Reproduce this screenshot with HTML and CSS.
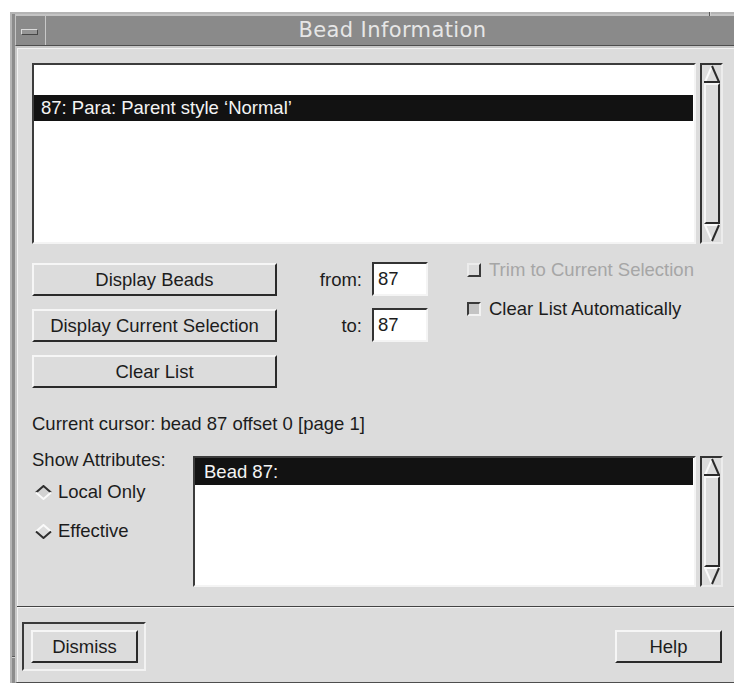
FILE: index.html
```html
<!DOCTYPE html>
<html lang="en">
<head>
<meta charset="utf-8">
<title>Bead Information</title>
<link rel="stylesheet" href="styles.css">
</head>
<body>
<div class="frame">
  <span class="frame-notch"></span>
  <span class="frame-side-notch"></span>
  <div class="titlebar">
    <div class="menu-btn"><span class="menu-glyph"></span></div>
    <div class="title">Bead Information</div>
  </div>

  <div class="dialog">
    <div class="work">
      <div class="list-row">
        <div class="list main-list">
          <div class="item"></div>
          <div class="item selected">87: Para: Parent style ‘Normal’</div>
        </div>
        <div class="scrollbar">
          <svg class="arrow" viewBox="0 0 16 18" width="16" height="18">
            <polygon points="1,17 8,1 15,17" fill="#dcdcdc"/>
            <line x1="1" y1="17" x2="8" y2="1" stroke="#fafafa" stroke-width="2"/>
            <line x1="8" y1="1" x2="15" y2="17" stroke="#2a2a2a" stroke-width="2"/>
            <line x1="0" y1="17" x2="16" y2="17" stroke="#2a2a2a" stroke-width="2"/>
          </svg>
          <div class="thumb"></div>
          <svg class="arrow" viewBox="0 0 16 18" width="16" height="18">
            <polygon points="1,1 15,1 8,17" fill="#dcdcdc"/>
            <line x1="0" y1="1" x2="16" y2="1" stroke="#fafafa" stroke-width="2"/>
            <line x1="1" y1="1" x2="8" y2="17" stroke="#fafafa" stroke-width="2"/>
            <line x1="15" y1="1" x2="8" y2="17" stroke="#2a2a2a" stroke-width="2"/>
          </svg>
        </div>
      </div>

      <div class="controls">
        <button class="btn wide">Display Beads</button>
        <span class="field-label">from:</span>
        <span class="field">87</span>
        <div class="toggles">
          <div class="toggle disabled"><span class="check raised"></span>Trim to Current Selection</div>
          <div class="toggle"><span class="check sunken"></span>Clear List Automatically</div>
        </div>
        <button class="btn wide">Display Current Selection</button>
        <span class="field-label">to:</span>
        <span class="field">87</span>
        <button class="btn wide">Clear List</button>
      </div>

      <div class="cursor-line">Current cursor: bead 87 offset 0 [page 1]</div>

      <div class="attrs">
        <div class="attr-opts">
          <div class="attr-label">Show Attributes:</div>
          <div class="radio first">
            <svg viewBox="0 0 17 15" width="17" height="15">
              <polygon points="8.5,1 16,7.5 8.5,14 1,7.5" fill="#d2d2d2"/>
              <polyline points="1,7.5 8.5,1 16,7.5" fill="none" stroke="#2e2e2e" stroke-width="2"/>
              <polyline points="1,7.5 8.5,14 16,7.5" fill="none" stroke="#fafafa" stroke-width="2"/>
            </svg>
            <span>Local Only</span>
          </div>
          <div class="radio second">
            <svg viewBox="0 0 17 15" width="17" height="15">
              <polygon points="8.5,1 16,7.5 8.5,14 1,7.5" fill="#dcdcdc"/>
              <polyline points="1,7.5 8.5,1 16,7.5" fill="none" stroke="#fafafa" stroke-width="2"/>
              <polyline points="1,7.5 8.5,14 16,7.5" fill="none" stroke="#2e2e2e" stroke-width="2"/>
            </svg>
            <span>Effective</span>
          </div>
        </div>
        <div class="list-row attr-row">
          <div class="list attr-list">
            <div class="item selected tall">Bead 87:</div>
          </div>
          <div class="scrollbar">
            <svg class="arrow" viewBox="0 0 16 18" width="16" height="18">
              <polygon points="1,17 8,1 15,17" fill="#dcdcdc"/>
              <line x1="1" y1="17" x2="8" y2="1" stroke="#fafafa" stroke-width="2"/>
              <line x1="8" y1="1" x2="15" y2="17" stroke="#2a2a2a" stroke-width="2"/>
              <line x1="0" y1="17" x2="16" y2="17" stroke="#2a2a2a" stroke-width="2"/>
            </svg>
            <div class="thumb"></div>
            <svg class="arrow" viewBox="0 0 16 18" width="16" height="18">
              <polygon points="1,1 15,1 8,17" fill="#dcdcdc"/>
              <line x1="0" y1="1" x2="16" y2="1" stroke="#fafafa" stroke-width="2"/>
              <line x1="1" y1="1" x2="8" y2="17" stroke="#fafafa" stroke-width="2"/>
              <line x1="15" y1="1" x2="8" y2="17" stroke="#2a2a2a" stroke-width="2"/>
            </svg>
          </div>
        </div>
      </div>
    </div>

    <div class="separator"></div>

    <div class="actions">
      <div class="default-ring"><button class="btn small">Dismiss</button></div>
      <button class="btn small">Help</button>
    </div>
  </div>
</div>
</body>
</html>
```

FILE: styles.css
```css
html, body {
  margin: 0;
  padding: 0;
  overflow: hidden;
  background: #ffffff;
}

body {
  width: 734px;
  height: 685px;
  font-family: "Liberation Sans", Arial, sans-serif;
  font-size: 18.5px;
  color: #1c1c1c;
}

/* window manager frame */
.frame {
  position: relative;
  margin: 12px 0 0 10px;
  width: 724px;
  background: #8c8c8c;
  border-top: 2px solid #b4b4b4;
  border-left: 2px solid #b4b4b4;
  border-right: 2px solid #5a5a5a;
  padding: 0 3px;
}

.frame-notch {
  position: absolute;
  left: 697px;
  top: -2px;
  width: 1px;
  height: 4px;
  background: #5a5a5a;
  border-right: 1px solid #d0d0d0;
}

.frame-side-notch {
  position: absolute;
  left: 0;
  top: 642px;
  width: 3px;
  height: 1px;
  background: #5a5a5a;
  border-bottom: 1px solid #d0d0d0;
}

.titlebar {
  display: flex;
  height: 29px;
  background: #8a8a8a;
  border-top: 2px solid #c4c4c4;
  border-left: 1px solid #c4c4c4;
  border-bottom: 1px solid #4e4e4e;
}

.menu-btn {
  width: 29px;
  border-right: 1px solid #c8c8c8;
  display: flex;
  align-items: center;
  justify-content: center;
}

.menu-glyph {
  width: 15px;
  height: 4px;
  background: #959595;
  border: 1px solid;
  border-color: #dadada #474747 #474747 #dadada;
  margin-left: -2px;
  margin-top: 2px;
}

.title {
  flex: 1;
  text-align: center;
  font-family: "DejaVu Sans", sans-serif;
  font-size: 21px;
  letter-spacing: 0.4px;
  line-height: 29px;
  color: #e6e6e6;
}

/* dialog body */
.dialog {
  width: 720px;
  background: #dcdcdc;
  border-top: 2px solid #c8c8c8;
  border-left: 2px solid #c8c8c8;
  border-bottom: 1px solid #4e4e4e;
  box-shadow: inset 1px 1px 0 #f2f2f2;
}

.work {
  padding: 15px 0 19px 15px;
}

.list-row {
  display: flex;
  gap: 4px;
  height: 181px;
}

.list {
  background: #ffffff;
  border: 2px solid;
  border-color: #3c3c3c #f4f4f4 #f4f4f4 #3c3c3c;
  padding: 4px 1px 0 0;
}

.main-list {
  width: 659px;
}

.item {
  height: 26px;
  line-height: 26px;
  padding-left: 7px;
  white-space: nowrap;
}

.item.selected {
  background: #121212;
  color: #f4f4f4;
}

.item.tall {
  height: 27px;
  line-height: 27px;
  padding-left: 9px;
}

.scrollbar {
  width: 19px;
  display: flex;
  flex-direction: column;
  border: 2px solid;
  border-color: #333333 #ececec #ececec #333333;
  background: #dcdcdc;
}

.arrow {
  display: block;
  margin: 0 1px 0 2px;
  flex: none;
}

.thumb {
  flex: 1;
  margin: 0 1px 0 2px;
  background: #dcdcdc;
  border: 2px solid;
  border-color: #f6f6f6 #2a2a2a #2a2a2a #f6f6f6;
}

/* buttons, fields and toggles */
.controls {
  display: grid;
  grid-template-columns: 245px 95px 56px 1fr;
  grid-template-rows: 33px 33px 33px;
  row-gap: 13px;
  margin-top: 19px;
}

.btn {
  font: inherit;
  color: #1c1c1c;
  background: #dcdcdc;
  border: 2px solid;
  border-color: #f6f6f6 #2a2a2a #2a2a2a #f6f6f6;
  padding: 0;
  height: 33px;
  margin: 0;
}

.controls .btn {
  grid-column: 1;
}

.field-label {
  grid-column: 2;
  text-align: right;
  padding-right: 10px;
  line-height: 33px;
}

.field {
  grid-column: 3;
  background: #ffffff;
  border: 2px solid;
  border-color: #333333 #f4f4f4 #f4f4f4 #333333;
  padding-left: 4px;
  line-height: 29px;
  margin-top: -1px;
}

.toggles {
  grid-column: 4;
  grid-row: 1 / span 3;
  padding-left: 39px;
  display: flex;
  flex-direction: column;
  gap: 19px;
  margin-top: -3px;
}

.toggle {
  display: flex;
  align-items: center;
  gap: 8px;
  height: 20px;
  white-space: nowrap;
}

.toggle.disabled {
  color: #a6a6a6;
}

.check {
  width: 10px;
  height: 10px;
  border: 2px solid;
  flex: none;
}

.check.raised {
  background: #dcdcdc;
  border-color: #ececec #3a3a3a #3a3a3a #ececec;
}

.check.sunken {
  background: #c4c4c4;
  border-color: #3a3a3a #f2f2f2 #f2f2f2 #3a3a3a;
}

.cursor-line {
  margin-top: 25px;
  height: 22px;
  line-height: 22px;
}

/* attribute list */
.attrs {
  display: flex;
  margin-top: 14px;
}

.attr-opts {
  width: 161px;
}

.attr-label {
  line-height: 22px;
}

.radio {
  display: flex;
  align-items: center;
  gap: 6px;
  height: 22px;
  line-height: 22px;
  padding-left: 3px;
}

.radio svg {
  display: block;
}

.radio.first {
  margin-top: 10px;
}

.radio.second {
  margin-top: 17px;
}

.attr-row {
  margin-top: 7px;
  height: 131px;
}

.attr-list {
  width: 498px;
  padding: 0 1px 0 0;
}

.separator {
  height: 1px;
  background: #444444;
  border-bottom: 1px solid #f4f4f4;
}

.actions {
  display: flex;
  justify-content: space-between;
  align-items: flex-start;
  padding: 14px 15px 11px 5px;
}

.default-ring {
  width: 107px;
  height: 33px;
  padding: 6px 6px 6px 7px;
  border: 2px solid;
  border-color: #3a3a3a #f2f2f2 #f2f2f2 #3a3a3a;
}

.btn.small {
  width: 107px;
}

.actions > .btn.small {
  margin-top: 8px;
}
```
